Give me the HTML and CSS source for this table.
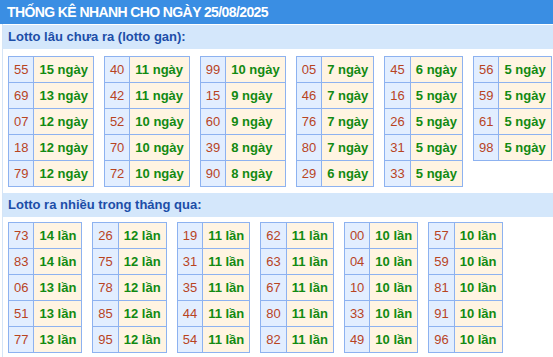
FILE: index.html
```html
<!DOCTYPE html>
<html lang="vi">
<head>
<meta charset="utf-8">
<link rel="stylesheet" href="styles.css">
</head>
<body>
<div class="title">THỐNG KÊ NHANH CHO NGÀY 25/08/2025</div>
<div class="box">
  <div class="sub">Lotto lâu chưa ra (lotto gan):</div>
  <div class="grid gan">
    <table><tr><td class="n">55</td><td class="v">15 ngày</td></tr><tr><td class="n">69</td><td class="v">13 ngày</td></tr><tr><td class="n">07</td><td class="v">12 ngày</td></tr><tr><td class="n">18</td><td class="v">12 ngày</td></tr><tr><td class="n">79</td><td class="v">12 ngày</td></tr></table>
    <table><tr><td class="n">40</td><td class="v">11 ngày</td></tr><tr><td class="n">42</td><td class="v">11 ngày</td></tr><tr><td class="n">52</td><td class="v">10 ngày</td></tr><tr><td class="n">70</td><td class="v">10 ngày</td></tr><tr><td class="n">72</td><td class="v">10 ngày</td></tr></table>
    <table><tr><td class="n">99</td><td class="v">10 ngày</td></tr><tr><td class="n">15</td><td class="v">9 ngày</td></tr><tr><td class="n">60</td><td class="v">9 ngày</td></tr><tr><td class="n">39</td><td class="v">8 ngày</td></tr><tr><td class="n">90</td><td class="v">8 ngày</td></tr></table>
    <table><tr><td class="n">05</td><td class="v">7 ngày</td></tr><tr><td class="n">46</td><td class="v">7 ngày</td></tr><tr><td class="n">76</td><td class="v">7 ngày</td></tr><tr><td class="n">80</td><td class="v">7 ngày</td></tr><tr><td class="n">29</td><td class="v">6 ngày</td></tr></table>
    <table><tr><td class="n">45</td><td class="v">6 ngày</td></tr><tr><td class="n">16</td><td class="v">5 ngày</td></tr><tr><td class="n">26</td><td class="v">5 ngày</td></tr><tr><td class="n">31</td><td class="v">5 ngày</td></tr><tr><td class="n">33</td><td class="v">5 ngày</td></tr></table>
    <table><tr><td class="n">56</td><td class="v">5 ngày</td></tr><tr><td class="n">59</td><td class="v">5 ngày</td></tr><tr><td class="n">61</td><td class="v">5 ngày</td></tr><tr><td class="n">98</td><td class="v">5 ngày</td></tr></table>
  </div>
  <div class="sub">Lotto ra nhiều trong tháng qua:</div>
  <div class="grid nhieu">
    <table><tr><td class="n">73</td><td class="v">14 lần</td></tr><tr><td class="n">83</td><td class="v">14 lần</td></tr><tr><td class="n">06</td><td class="v">13 lần</td></tr><tr><td class="n">51</td><td class="v">13 lần</td></tr><tr><td class="n">77</td><td class="v">13 lần</td></tr></table>
    <table><tr><td class="n">26</td><td class="v">12 lần</td></tr><tr><td class="n">75</td><td class="v">12 lần</td></tr><tr><td class="n">78</td><td class="v">12 lần</td></tr><tr><td class="n">85</td><td class="v">12 lần</td></tr><tr><td class="n">95</td><td class="v">12 lần</td></tr></table>
    <table><tr><td class="n">19</td><td class="v">11 lần</td></tr><tr><td class="n">31</td><td class="v">11 lần</td></tr><tr><td class="n">35</td><td class="v">11 lần</td></tr><tr><td class="n">44</td><td class="v">11 lần</td></tr><tr><td class="n">54</td><td class="v">11 lần</td></tr></table>
    <table><tr><td class="n">62</td><td class="v">11 lần</td></tr><tr><td class="n">63</td><td class="v">11 lần</td></tr><tr><td class="n">67</td><td class="v">11 lần</td></tr><tr><td class="n">80</td><td class="v">11 lần</td></tr><tr><td class="n">82</td><td class="v">11 lần</td></tr></table>
    <table><tr><td class="n">00</td><td class="v">10 lần</td></tr><tr><td class="n">04</td><td class="v">10 lần</td></tr><tr><td class="n">10</td><td class="v">10 lần</td></tr><tr><td class="n">33</td><td class="v">10 lần</td></tr><tr><td class="n">49</td><td class="v">10 lần</td></tr></table>
    <table><tr><td class="n">57</td><td class="v">10 lần</td></tr><tr><td class="n">59</td><td class="v">10 lần</td></tr><tr><td class="n">81</td><td class="v">10 lần</td></tr><tr><td class="n">91</td><td class="v">10 lần</td></tr><tr><td class="n">96</td><td class="v">10 lần</td></tr></table>
  </div>
</div>
</body>
</html>
```
FILE: styles.css
```css
html, body {
  margin: 0;
  padding: 0;
  background: #fff;
  font-family: "Liberation Sans", Arial, sans-serif;
}
.title {
  background: #3a8ee3;
  color: #fff;
  font-weight: bold;
  font-size: 14px;
  height: 24px;
  line-height: 24px;
  padding-left: 7px;
  letter-spacing: -0.6px;
}
.box {
  margin-left: 2px;
  border-left: 1px solid #d4e4f6;
  padding-top: 1px;
}
.sub {
  background: #d4e7fb;
  color: #1c4ea8;
  font-weight: bold;
  font-size: 13px;
  height: 24px;
  line-height: 24px;
  padding-left: 5px;
}
.grid {
  display: flex;
  flex-wrap: nowrap;
  align-items: flex-start;
  gap: 10px;
  padding-left: 5px;
}
.gan {
  padding-top: 7px;
  padding-bottom: 6px;
}
.nhieu {
  padding-top: 5px;
  padding-bottom: 5px;
}
table {
  border-collapse: collapse;
  font-size: 13px;
  flex: none;
}
tr {
  height: 26px;
}
td {
  border: 1px solid #8db2f0;
  padding: 0;
  white-space: nowrap;
}
.n {
  background: #e2eeff;
  color: #b8441f;
  text-align: center;
  padding: 0 5px;
}
.v {
  background: #fff4e2;
  color: #128a12;
  font-weight: bold;
  padding: 0 5px;
}
```
